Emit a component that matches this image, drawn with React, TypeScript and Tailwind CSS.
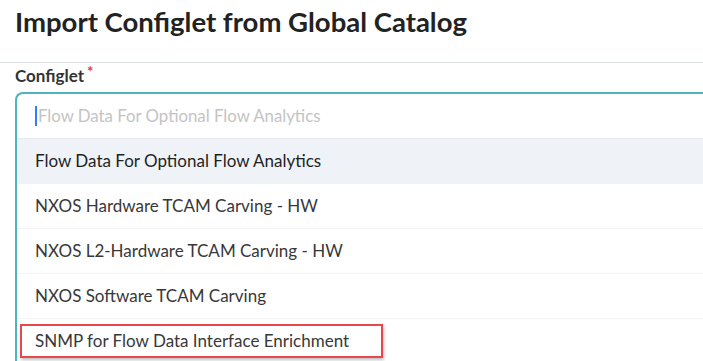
const options = [
  "Flow Data For Optional Flow Analytics",
  "NXOS Hardware TCAM Carving - HW",
  "NXOS L2-Hardware TCAM Carving - HW",
  "NXOS Software TCAM Carving",
  "SNMP for Flow Data Interface Enrichment",
]

export default function App() {
  return (
    <div className="h-[361px] w-[703px] overflow-hidden bg-white font-['Lato','Noto_Sans',sans-serif]">
      <h1 className="border-b border-[#dfe3e8] px-[15px] pb-[23px] pt-[5px] text-[27.5px] font-bold leading-[34px] text-[#222]">
        Import Configlet from Global Catalog
      </h1>
      <div className="px-[15px]">
        <label className="mt-[2px] block text-[17px] font-bold leading-[22px] text-[#333]">
          Configlet
          <span className="relative -top-[5px] ml-[3px] text-[15px] leading-none text-[#e0383e]">*</span>
        </label>
        <div className="-mr-6 mt-[5px] rounded-tl-[8px] border-l-2 border-t-2 border-[#4db5be]">
          <div className="flex h-[44px] items-center pl-[18px] text-[16.8px] text-[#c4c4c4]">
            <span className="mr-[1px] h-[20px] w-[2px] bg-[#2d7ff9]" />
            Flow Data For Optional Flow Analytics
          </div>
          {options.map((o, i) => (
            <div
              key={o}
              className={
                i === 0
                  ? "flex h-[45px] items-center bg-[#eff3f7] pl-[18px] text-[17px] text-[#1f1f1f] shadow-[inset_0_1px_2px_rgba(0,0,0,0.04)]"
                  : "relative flex h-[45px] items-center border-t border-[#f2f3f5] pl-[18px] text-[17px] text-[#383838]"
              }
            >
              {o}
              {i === options.length - 1 && (
                <span className="absolute left-[3px] top-[5px] h-[34px] w-[363px] border-2 border-[#e8474d] shadow-[1px_2px_3px_rgba(0,0,0,0.25)]" />
              )}
            </div>
          ))}
        </div>
      </div>
    </div>
  )
}
